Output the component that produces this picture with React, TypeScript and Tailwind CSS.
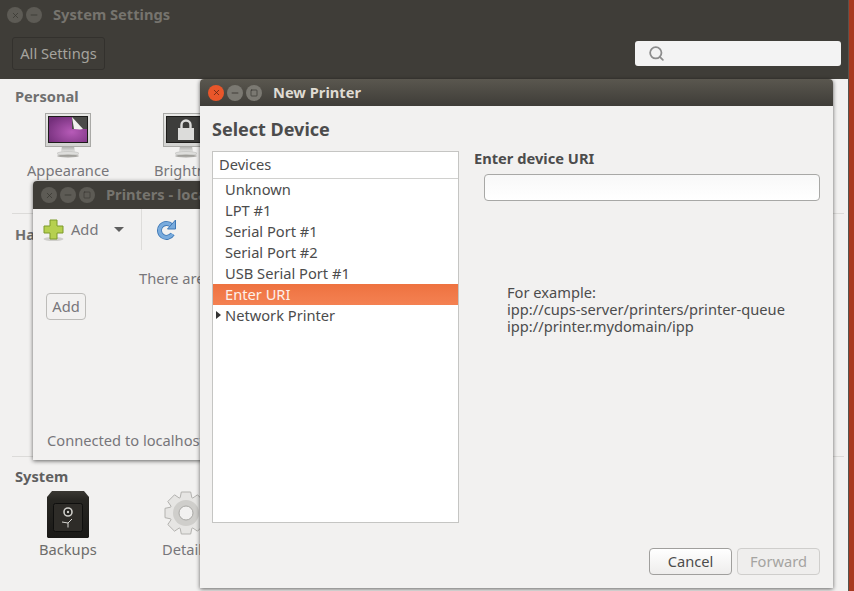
import { Search, X, Minus, Square } from 'lucide-react'

function WinButtons({ active, noMax }: { active?: boolean; noMax?: boolean }) {
  const base = 'w-[16px] h-[16px] rounded-full flex items-center justify-center'
  const dim = active ? 'bg-[#7b7972] text-[#35332f]' : 'bg-[#5d5b55] text-[#393833]'
  return (
    <div className="flex gap-[3px]">
      <div className={`${base} ${active ? 'bg-[#e9562a] text-[#5a2413]' : dim}`}><X size={9} strokeWidth={2} /></div>
      <div className={`${base} ${dim}`}><Minus size={10} strokeWidth={2} /></div>
      {!noMax && <div className={`${base} ${dim}`}><Square size={8} strokeWidth={2} /></div>}
    </div>
  )
}

function Monitor({ children }: { children: React.ReactNode }) {
  return (
    <svg width="46" height="45" viewBox="0 0 46 45" className="block">
      <defs>
        <linearGradient id="frame" x1="0" y1="0" x2="0" y2="1">
          <stop offset="0" stopColor="#e9e9e7" />
          <stop offset="1" stopColor="#d2d2d0" />
        </linearGradient>
        <linearGradient id="stand" x1="0" y1="0" x2="0" y2="1">
          <stop offset="0" stopColor="#a8a8a5" />
          <stop offset="1" stopColor="#e6e6e4" />
        </linearGradient>
      </defs>
      <path d="M17 33h12l1 6H16z" fill="url(#stand)" />
      <ellipse cx="23" cy="40.500" rx="11" ry="2" fill="#dededc" stroke="#b5b5b2" strokeWidth="0.5" />
      <ellipse cx="23" cy="43" rx="11" ry="1.500" fill="#8a8983" opacity="0.7" />
      <rect x="0.500" y="0.500" width="45" height="33" fill="url(#frame)" stroke="#a9a9a6" />
      <rect x="3" y="3" width="40" height="27" fill="#1d1c1a" />
      {children}
    </svg>
  )
}

function Gear() {
  // eight-tooth cog, computed so the teeth stay even
  const pts: string[] = []
  for (let i = 0; i < 8; i++) {
    const a = (i * Math.PI) / 4
    for (const [r, d] of [[16.5, -0.36], [21.5, -0.22], [21.5, 0.22], [16.5, 0.36]] as const) {
      pts.push(`${(22 + r * Math.cos(a + d)).toFixed(1)},${(22 + r * Math.sin(a + d)).toFixed(1)}`)
    }
  }
  return (
    <svg width="44" height="44" viewBox="0 0 44 44" className="block">
      <polygon points={pts.join(' ')} fill="#e6e5e3" stroke="#b3b2af" strokeLinejoin="round" />
      <circle cx="22" cy="22" r="13" fill="#cfcecb" />
      <circle cx="22" cy="22" r="7" fill="#f2f1f0" stroke="#a9a8a5" />
    </svg>
  )
}

function Safe() {
  return (
    <svg width="42" height="47" viewBox="0 0 42 47" className="block">
      <defs>
        <linearGradient id="safe" x1="0" y1="0" x2="0" y2="1">
          <stop offset="0" stopColor="#3a3833" />
          <stop offset="0.2" stopColor="#272622" />
          <stop offset="1" stopColor="#1a1917" />
        </linearGradient>
      </defs>
      <path d="M5 0h32l5 6v40l-1 1H1l-1-1V6z" fill="url(#safe)" />
      <rect x="6.500" y="12.500" width="29" height="28" rx="2" fill="#2e2c28" stroke="#0f0f0e" />
      <circle cx="21" cy="21" r="4" fill="#23221f" stroke="#cfcec9" strokeWidth="1.600" />
      <circle cx="21" cy="21" r="1.200" fill="#cfcec9" />
      <path d="M21 32v4.500M21 32l-6-1M21 32l4-4" stroke="#d8d7d2" strokeWidth="1" />
    </svg>
  )
}

function AddIcon() {
  return (
    <svg width="21" height="22" viewBox="0 0 21 22" className="block">
      <ellipse cx="10.500" cy="20" rx="10" ry="2" fill="#cfcecb" />
      <path d="M7 1h7v6h6v7h-6v6H7v-6H1V7h6z" fill="#b6d04f" stroke="#7d9a2a" />
    </svg>
  )
}

function RefreshIcon() {
  return (
    <svg width="20" height="21" viewBox="0 0 20 21" className="block">
      <path d="M15.500 6.500A7 7 0 1 0 16.500 15" fill="none" stroke="#3f78b5" strokeWidth="5" />
      <path d="M15.500 6.500A7 7 0 1 0 16.500 15" fill="none" stroke="#79abdd" strokeWidth="3.400" />
      <path d="M19.500 1v9h-8z" fill="#79abdd" stroke="#3f78b5" strokeLinejoin="round" />
    </svg>
  )
}

const rows = ['Unknown', 'LPT #1', 'Serial Port #1', 'Serial Port #2', 'USB Serial Port #1', 'Enter URI', 'Network Printer']

export default function App() {
  return (
    <div className="relative w-[854px] h-[591px] overflow-hidden bg-[#a8391f] font-['Noto_Sans',sans-serif] text-[14.67px] text-[#4c4c4c]">
      {/* system settings */}
      <div className="absolute left-0 top-0 w-[849px] h-[591px] flex flex-col bg-[#f2f1f0] border-r border-[#55534e]">
        <div className="h-[79px] bg-[#3f3d38] shrink-0 flex flex-col">
          <div className="h-[30px] flex items-center pl-[7px]">
            <WinButtons noMax />
            <span className="ml-[11px] mt-[-2px] font-bold text-[#76746e]">System Settings</span>
          </div>
          <div className="flex items-center justify-between pl-[12px] pr-[7px] mt-[7px]">
            <div className="h-[33px] w-[93px] pb-[2px] border border-[#33312d] rounded-[3px] flex items-center justify-center text-[#a5a39e]">All Settings</div>
            <div className="h-[25px] w-[206px] bg-[#f3f3f3] rounded-[3px] flex items-center pl-[13px] text-[#8d8d8d]">
              <Search size={17} strokeWidth={2.5} />
            </div>
          </div>
        </div>
        <div className="flex-1 flex flex-col pl-[12px] pr-[4px]">
          <div className="pl-[3px] pt-[8px] font-bold leading-[18px] text-[#6f6f6f]">Personal</div>
          <div className="h-[109px] border-b border-[#dcdbd9]">
            <div className="flex w-[188px] h-[80px] pt-[8px] overflow-hidden text-[#77767a]">
              <div className="w-[112px] shrink-0 pl-[33px] relative">
                <Monitor>
                  <defs>
                    <radialGradient id="purple" cx="0.6" cy="0.6" r="0.7">
                      <stop offset="0" stopColor="#b75bb8" />
                      <stop offset="1" stopColor="#75307c" />
                    </radialGradient>
                  </defs>
                  <rect x="4" y="4" width="38" height="25" fill="url(#purple)" />
                  <rect x="27" y="4" width="15" height="12" fill="#4b4b49" />
                  <path d="M27 4l11 12-3 .5-6-.5z" fill="#f2f2f0" />
                </Monitor>
                <span className="absolute left-[15px] top-[46px] whitespace-nowrap">Appearance</span>
              </div>
              <div className="pl-[39px] shrink-0 relative">
                <Monitor>
                  <rect x="4" y="4" width="38" height="25" fill="#3d3d3b" />
                  <rect x="15" y="15" width="16" height="12" fill="#dcdcda" />
                  <path d="M18.500 15v-3a4.500 4.500 0 0 1 9 0v3" fill="none" stroke="#dcdcda" strokeWidth="2.400" />
                </Monitor>
                <span className="absolute left-[30px] top-[46px] whitespace-nowrap">Brightness</span>
              </div>
            </div>
          </div>
          <div className="pl-[3px] pt-[11px] h-[243px] border-b border-[#dcdbd9]">
            <div className="w-[18px] overflow-hidden font-bold text-[#6f6f6f] leading-[18px]">Hardware</div>
          </div>
          <div className="pl-[3px] pt-[10px] font-bold leading-[18px] text-[#5f5f5f]">System</div>
          <div className="flex w-[188px] h-[80px] overflow-hidden pt-[6px] text-[#77767a]">
            <div className="w-[120px] shrink-0 pl-[35px] relative">
              <Safe />
              <span className="absolute left-[27px] top-[47px] text-[#6d6c6a]">Backups</span>
            </div>
            <div className="pl-[32px] shrink-0 relative">
              <Gear />
              <span className="absolute left-[30px] top-[47px]">Details</span>
            </div>
          </div>
        </div>
      </div>

      {/* printers */}
      <div className="absolute left-[33px] top-[181px] w-[300px] h-[279px] flex flex-col bg-[#f2f1f0] shadow-[0_1px_4px_rgba(0,0,0,0.6)] rounded-t-[4px] overflow-hidden">
        <div className="w-[167px] h-[279px] flex flex-col overflow-hidden">
          <div className="h-[28px] shrink-0 bg-[#3f3d38] flex items-center pl-[8px]">
            <WinButtons />
            <span className="ml-[11px] mt-[-2px] font-bold text-[#76746e] whitespace-nowrap">Printers - localhost</span>
          </div>
          <div className="h-[41px] shrink-0 flex items-center text-[#77767a]">
            <div className="pl-[10px] flex items-center w-[109px] shrink-0 h-full border-r border-[#dddcda]">
              <AddIcon />
              <span className="ml-[7px] mt-[-2px]">Add</span>
              <span className="ml-[16px] w-0 h-0 border-x-[5px] border-x-transparent border-t-[5px] border-t-[#5f5f5f]" />
            </div>
            <div className="ml-[14px]"><RefreshIcon /></div>
          </div>
          <div className="pl-[106px] pt-[19px] leading-[19px] text-[#77767a] whitespace-nowrap">There are no printers configured yet.</div>
          <div className="pl-[13px] pt-[5px]">
            <div className="w-[40px] h-[27px] pb-[2px] border border-[#bdbcb9] rounded-[4px] flex items-center justify-center text-[#77767a]">Add</div>
          </div>
          <div className="mt-auto pl-[14px] pb-[10px] text-[#77767a] leading-[19px] whitespace-nowrap">Connected to localhost</div>
        </div>
      </div>

      {/* new printer dialog */}
      <div className="absolute left-[200px] top-[79px] w-[633px] h-[509px] flex flex-col bg-[#f2f1f0] shadow-[0_1px_4px_rgba(0,0,0,0.6)] rounded-t-[4px] overflow-hidden">
        <div className="h-[27px] shrink-0 bg-gradient-to-b from-[#5a574f] to-[#3f3d38] flex items-center pl-[8px]">
          <WinButtons active />
          <span className="ml-[11px] mt-[-2px] font-bold text-[#dfdbd2]">New Printer</span>
        </div>
        <div className="flex-1 flex flex-col px-[12px]">
          <div className="h-[45px] pt-[11px] font-bold text-[18px] leading-[24px] text-[#4c4c4c]">Select Device</div>
          <div className="flex h-[372px]">
            <div className="w-[247px] shrink-0 bg-white border border-[#c5c5c3]">
              <div className="h-[27px] pl-[6px] pb-[2px] flex items-center border-b border-[#d0d0ce]">Devices</div>
              {rows.map(r => (
                <div
                  key={r}
                  className={`h-[21px] pl-[12px] pb-[2px] flex items-center relative ${r === 'Enter URI' ? 'bg-gradient-to-b from-[#ee7240] to-[#f48152] text-[#fdf0ea]' : ''}`}
                >
                  {r === 'Network Printer' && (
                    <span className="absolute left-[3px] top-[6px] w-0 h-0 border-y-[4px] border-y-transparent border-l-[5px] border-l-[#333]" />
                  )}
                  {r}
                </div>
              ))}
            </div>
            <div className="flex-1 pl-[15px] pr-[1px] flex flex-col">
              <div className="font-bold leading-[18px] mt-[-2px]">Enter device URI</div>
              <div className="ml-[10px] mt-[7px] h-[27px] bg-gradient-to-b from-[#f8f8f8] to-white border border-[#a8a8a6] rounded-[4px]" />
              <div className="ml-[33px] mt-[83px] leading-[17px]">
                <div>For example:</div>
                <div>ipp://cups-server/printers/printer-queue</div>
                <div>ipp://printer.mydomain/ipp</div>
              </div>
            </div>
          </div>
          <div className="flex justify-end gap-[5px] pr-[1px] mt-[25px]">
            <div className="w-[83px] h-[27px] pb-[2px] flex items-center justify-center bg-gradient-to-b from-white to-[#eeedec] border border-[#a09f9d] rounded-[4px]">Cancel</div>
            <div className="w-[83px] h-[27px] pb-[2px] flex items-center justify-center bg-[#efeeed] border border-[#cfcecc] rounded-[4px] text-[#a5a4a1]">Forward</div>
          </div>
        </div>
      </div>
    </div>
  )
}
